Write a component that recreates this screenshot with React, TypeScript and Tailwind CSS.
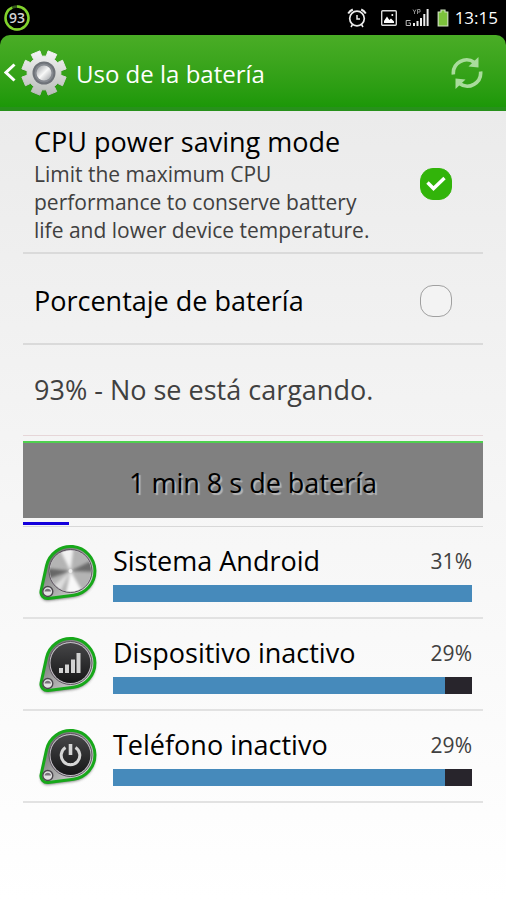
import React, { useId, useState } from 'react';

interface UsageEntry {
  id: string;
  name: string;
  percent: number;
  icon: 'system' | 'signal' | 'power';
}

const entries: UsageEntry[] = [
  { id: 'android', name: 'Sistema Android', percent: 31.4, icon: 'system' },
  { id: 'idle', name: 'Dispositivo inactivo', percent: 29, icon: 'signal' },
  { id: 'phone', name: 'Teléfono inactivo', percent: 29, icon: 'power' },
];

const maxPercent = Math.max(...entries.map(e => e.percent));

// Outline of an eight-toothed gear around 0,0
const gearPoints = (): string => {
  const points: string[] = [];
  for (let i = 0; i < 8; i++) {
    const mid = 22.5 + i * 45;
    [[-15, 17], [-12, 22.5], [12, 22.5], [15, 17]].forEach(([offset, radius]) => {
      const a = ((mid + offset) * Math.PI) / 180;
      points.push(`${(Math.cos(a) * radius).toFixed(2)},${(Math.sin(a) * radius).toFixed(2)}`);
    });
  }
  return points.join(' ');
};

const GearIcon: React.FC = () => (
  <svg className="w-12 h-12 shrink-0" viewBox="-24 -24 48 48" aria-hidden="true">
    <defs>
      <linearGradient id="gearBody" x1="0" y1="0" x2="0" y2="1">
        <stop offset="0" stopColor="#f4f4f4" />
        <stop offset="1" stopColor="#b9bcb9" />
      </linearGradient>
      <linearGradient id="gearHub" x1="0" y1="0" x2="1" y2="1">
        <stop offset="0" stopColor="#9a9da1" />
        <stop offset="0.5" stopColor="#f8f8f8" />
        <stop offset="1" stopColor="#9a9da1" />
      </linearGradient>
    </defs>
    <polygon points={gearPoints()} fill="#3c7a2c" opacity="0.5" transform="translate(0 1)" />
    <polygon points={gearPoints()} fill="url(#gearBody)" stroke="url(#gearBody)" strokeWidth="1" strokeLinejoin="round" />
    <circle r="11.5" fill="#6e7278" />
    <circle r="9.5" fill="#85898f" />
    <circle r="7.5" fill="url(#gearHub)" />
  </svg>
);

const StatusBar: React.FC<{ level: number }> = ({ level }) => (
  <div className="bg-black text-white h-[35px] flex items-center justify-between pl-1 pr-2">
    <svg className="w-[26px] h-[26px]" viewBox="0 0 26 26" role="img" aria-label={`${level}%`}>
      <circle cx="13" cy="13" r="11.5" fill="none" stroke="#35591a" strokeWidth="2.4" />
      <circle cx="13" cy="13" r="11.5" fill="none" stroke="#82d22c" strokeWidth="2.4" pathLength="100" strokeDasharray={`${level} 100`} transform="rotate(-90 13 13)" />
      <text x="13" y="18" textAnchor="middle" fontSize="14" fontWeight="600" fill="#d4d4d4">{level}</text>
    </svg>
    <div className="flex items-center">
      <svg className="w-5 h-5" viewBox="0 0 20 20" fill="none" stroke="#ececec" aria-hidden="true">
        <circle cx="10" cy="10.5" r="7.3" strokeWidth="1.7" />
        <path d="M10 7v4h3M5.5 16.5L4 19M14.5 16.5L16 19" strokeWidth="1.5" />
        <path d="M1.2 5.5A12 12 0 0 1 5.8 1.5M14.2 1.5A12 12 0 0 1 18.8 5.5" strokeWidth="2" />
      </svg>
      <svg className="w-4 h-4 ml-3.5" viewBox="0 0 16 16" aria-hidden="true">
        <rect x="0.7" y="0.7" width="14.6" height="14.6" rx="1" fill="none" stroke="#dcdcdc" strokeWidth="1.4" />
        <path d="M3 13V11L6 6.500L8.3 10L10 8.5L13 11.5V13Z" fill="#fff" />
        <circle cx="11.3" cy="5" r="1" fill="#fff" />
      </svg>
      <svg className="w-6 h-[18px] ml-2" viewBox="0 0 24 18" aria-hidden="true">
        <path d="M5.5 11.500H1.2V16.500H5.5V14H3.5" fill="none" stroke="#bdbdbd" strokeWidth="1" />
        <path d="M8 .5L9.500 3L11 .5M9.500 3V5M12.500 5V.5H15V3H13" fill="none" stroke="#8d8d8d" strokeWidth="1" />
        <path d="M8 14h2v3H8zM11.5 12h2v5h-2zM15 9h2v8h-2zM18.3 5h2v12h-2zM21.6 0h2v17h-2z" fill="#ececec" />
      </svg>
      <svg className="w-3 h-[18px] ml-2" viewBox="0 0 12 18" aria-hidden="true">
        <path d="M4 1H8V3H10.8V17H1.2V3H4Z" fill="#7cc23c" stroke="#cfe3bf" strokeWidth="1.2" />
      </svg>
      <span className="ml-1.5 text-[17px] leading-6">13:15</span>
    </div>
  </div>
);

const TitleBar: React.FC = () => (
  <div className="bg-black">
    <header className="h-[76px] rounded-t-[10px] bg-linear-to-b from-[#4aad26] to-[#1c9808] border-b-4 border-[#27911b] flex items-center text-white">
      <button type="button" aria-label="Atrás" className="flex items-center pl-1 pt-1">
        <svg className="w-3 h-5 shrink-0 mr-1" viewBox="0 0 12 20" fill="none" stroke="#fff" strokeWidth="3" aria-hidden="true">
          <path d="M10.5 1.5L2 9.5L10.5 17.5" />
        </svg>
        <GearIcon />
      </button>
      <h1 className="flex-1 pl-2 pt-1.5 text-2xl leading-8">Uso de la batería</h1>
      <button type="button" aria-label="Actualizar" className="mr-[23px] pt-1">
        <svg className="w-8 h-8" viewBox="0 0 32 32" aria-hidden="true">
          <g fill="none" stroke="#a9dc9c" strokeWidth="3.600">
            <path d="M2.4 17.5A13.3 13.3 0 0 1 23.500 5.500" />
            <path d="M29.6 14.5A13.3 13.3 0 0 1 8.500 26.500" />
          </g>
          <path d="M27.500 0V10.500L17.500 9.500Z" fill="#a9dc9c" />
          <path d="M4.500 32V21.500L14.500 22.500Z" fill="#a9dc9c" />
        </svg>
      </button>
    </header>
  </div>
);

interface CheckRowProps {
  title: string;
  summary?: string;
  checked: boolean;
  onChange: (value: boolean) => void;
}

const CheckRow: React.FC<CheckRowProps> = ({ title, summary, checked, onChange }) => {
  const id = useId();
  return (
    <div className="min-h-[91px] border-b-2 border-[#dadada] pl-[11px] pr-[31px] pt-[13px] pb-2 flex items-center gap-10">
      <label htmlFor={id} className="flex-1">
        <span className="block text-[27px] leading-9 text-black">{title}</span>
        {summary && <span className="block text-[21px] leading-7 text-[#404040]">{summary}</span>}
      </label>
      <span className="grid place-items-center shrink-0">
        <input
          id={id}
          type="checkbox"
          checked={checked}
          onChange={e => onChange(e.target.checked)}
          className="peer col-start-1 row-start-1 appearance-none w-8 h-8 rounded-[13px] border border-[#a0a0a0] bg-[#f3f3f3] checked:bg-[#32b40a] checked:border-[#32b40a]"
        />
        <svg className="col-start-1 row-start-1 w-5 h-5 pointer-events-none invisible peer-checked:visible" viewBox="0 0 20 20" fill="none" stroke="#fff" strokeWidth="3.4" aria-hidden="true">
          <path d="M1.5 8.5L7.5 14.5L18.5 4" />
        </svg>
      </span>
    </div>
  );
};

const BadgeIcon: React.FC<{ kind: UsageEntry['icon'] }> = ({ kind }) => (
  <svg className="w-16 h-16 shrink-0" viewBox="0 0 64 64" aria-hidden="true">
    <defs>
      <linearGradient id={`${kind}Plate`} x1="0" y1="0" x2="1" y2="1">
        <stop offset="0" stopColor="#555" />
        <stop offset="0.55" stopColor="#aaa" />
        <stop offset="1" stopColor="#eee" />
      </linearGradient>
      <linearGradient id={`${kind}Face`} x1="0" y1="0" x2="0" y2="1">
        <stop offset="0" stopColor="#464648" />
        <stop offset="1" stopColor="#161617" />
      </linearGradient>
      <clipPath id={`${kind}Clip`}>
        <circle cx="33.5" cy="31" r="20.5" />
      </clipPath>
      <filter id={`${kind}Soft`} x="-30%" y="-30%" width="160%" height="160%">
        <feGaussianBlur stdDeviation="1.8" />
      </filter>
    </defs>
    <path d="M9.5 25.8A24.5 24.5 0 1 1 36.5 55.3L11.3 58.5A6.5 6.5 0 0 1 4.1 50.6Z" fill="#444" opacity="0.8" filter={`url(#${kind}Soft)`} transform="translate(0 2)" />
    <path d="M9.5 25.8A24.5 24.5 0 1 1 36.5 55.3L11.3 58.5A6.5 6.5 0 0 1 4.1 50.6Z" fill={`url(#${kind}Plate)`} stroke="#17a81a" strokeWidth="3" />
    <circle cx="33.5" cy="31" r="21.5" fill="#c4c0c6" stroke="#5a525c" strokeWidth="1" />
    {kind === 'system' ? (
      <g clipPath={`url(#${kind}Clip)`}>
        <circle cx="33.5" cy="31" r="21" fill="#b4b4b4" />
        <g filter={`url(#${kind}Soft)`}>
          <path d="M33.5 31L20 4L37 4Z" fill="#f2f2f2" />
          <path d="M33.5 31L28 58L48 56Z" fill="#f8f8f8" />
          <path d="M33.5 31L8 28L8 40Z" fill="#666" />
          <path d="M33.5 31L60 18L60 32Z" fill="#6c6c6c" />
          <path d="M33.5 31L12 50L22 54Z" fill="#dedede" />
        </g>
        <circle cx="33.5" cy="31" r="2" fill="#fff" opacity="0.7" />
      </g>
    ) : (
      <circle cx="33.5" cy="31" r="20" fill={`url(#${kind}Face)`} />
    )}
    {kind === 'signal' && <path d="M22 36h4v5h-4zM28 32.5h4V41h-4zM34 27.5h4V41h-4zM39.5 21h4v20h-4z" fill="#d2d2d2" />}
    {kind === 'power' && (
      <g fill="none" stroke="#d6d6d6" strokeWidth="3">
        <path d="M28.5 23.5A9.3 9.3 0 1 0 38.5 23.5" />
        <path d="M33.5 20V31" strokeWidth="3.6" />
      </g>
    )}
    <circle cx="10.8" cy="51.5" r="5" fill="#e2e2e2" stroke="#4b474d" strokeWidth="1.4" />
    <path d="M7.5 51.5A3.3 3.3 0 0 1 14 51.5Z" fill="#77727a" />
  </svg>
);

const UsageRow: React.FC<{ entry: UsageEntry }> = ({ entry }) => (
  <li className="border-b-2 border-[#e2e2e2] pl-[14px] pr-[11px] py-[13px] flex items-center gap-3">
    <BadgeIcon kind={entry.icon} />
    <div className="flex-1 min-w-0">
      <div className="flex items-center justify-between">
        <span className="text-[27px] leading-9 text-black">{entry.name}</span>
        <span className="text-[21px] leading-9 text-[#404040]">{Math.round(entry.percent)}%</span>
      </div>
      <div className="mt-1.5 h-[17px] bg-[#28252c]">
        <div className="h-full bg-[#468abb]" style={{ width: `${(entry.percent / maxPercent) * 100}%` }} />
      </div>
    </div>
  </li>
);

const App: React.FC = () => {
  const [powerSaving, setPowerSaving] = useState(true);
  const [showPercent, setShowPercent] = useState(false);

  return (
    <div className="min-h-screen flex flex-col font-['Open_Sans','Noto_Sans',sans-serif]">
      <StatusBar level={93} />
      <TitleBar />
      <main className="flex-1 px-[23px] bg-linear-to-b from-[#ebebeb] via-[#f6f6f6] to-white">
        <CheckRow
          title="CPU power saving mode"
          summary="Limit the maximum CPU performance to conserve battery life and lower device temperature."
          checked={powerSaving}
          onChange={setPowerSaving}
        />
        <CheckRow title="Porcentaje de batería" checked={showPercent} onChange={setShowPercent} />
        <p className="min-h-[91px] border-b border-[#e6d6d8] pl-[11px] flex items-center text-[27px] leading-9 text-[#404040]">
          93% - No se está cargando.
        </p>
        <section className="pt-[5px] pb-px border-b border-[#d8d8d8]">
          <div className="h-[77px] bg-[#808080] border-t-2 border-[#4fd04f] pt-1 flex items-center justify-center text-[27px] leading-9 text-black text-shadow-[2px_2px_1px_#b8b8b8]">
            1 min 8 s de batería
          </div>
          <div className="mt-1 h-[3px] w-1/10 bg-[#1400dc]" />
        </section>
        <ul>
          {entries.map(entry => (
            <UsageRow key={entry.id} entry={entry} />
          ))}
        </ul>
      </main>
    </div>
  );
};

export default App;
